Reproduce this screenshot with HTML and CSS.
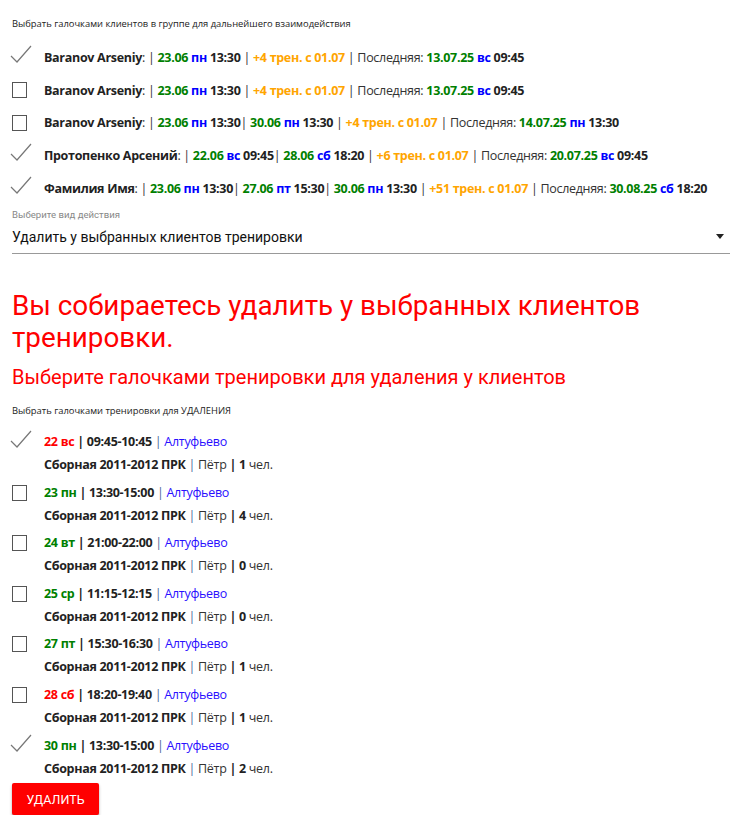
FILE: index.html
```html
<!DOCTYPE html>
<html lang="ru">
<head>
<meta charset="utf-8">
<title>Удаление тренировок</title>
<link rel="stylesheet" href="styles.css">
</head>
<body>
<div class="page">
  <div class="small-label clients-label">Выбрать галочками клиентов в группе для дальнейшего взаимодействия</div>
  <div class="clients">
    <div class="row">
      <span class="cb checked"><svg viewBox="0 0 22 18" width="22" height="18"><polyline points="1,11 7,17 21,1" /></svg></span>
      <span class="txt"><b>Baranov Arseniy</b>: | <b class="g">23.06</b> <b class="bl">пн</b> <b>13:30</b> | <b class="o">+4 трен. с 01.07</b> | Последняя: <b class="g">13.07.25</b> <b class="bl">вс</b> <b>09:45</b></span>
    </div>
    <div class="row">
      <span class="cb"><span class="box"></span></span>
      <span class="txt"><b>Baranov Arseniy</b>: | <b class="g">23.06</b> <b class="bl">пн</b> <b>13:30</b> | <b class="o">+4 трен. с 01.07</b> | Последняя: <b class="g">13.07.25</b> <b class="bl">вс</b> <b>09:45</b></span>
    </div>
    <div class="row">
      <span class="cb"><span class="box"></span></span>
      <span class="txt"><b>Baranov Arseniy</b>: | <b class="g">23.06</b> <b class="bl">пн</b> <b>13:30</b>| <b class="g">30.06</b> <b class="bl">пн</b> <b>13:30</b> | <b class="o">+4 трен. с 01.07</b> | Последняя: <b class="g">14.07.25</b> <b class="bl">пн</b> <b>13:30</b></span>
    </div>
    <div class="row">
      <span class="cb checked"><svg viewBox="0 0 22 18" width="22" height="18"><polyline points="1,11 7,17 21,1" /></svg></span>
      <span class="txt"><b>Протопенко Арсений</b>: | <b class="g">22.06</b> <b class="bl">вс</b> <b>09:45</b>| <b class="g">28.06</b> <b class="bl">сб</b> <b>18:20</b> | <b class="o">+6 трен. с 01.07</b> | Последняя: <b class="g">20.07.25</b> <b class="bl">вс</b> <b>09:45</b></span>
    </div>
    <div class="row">
      <span class="cb checked"><svg viewBox="0 0 22 18" width="22" height="18"><polyline points="1,11 7,17 21,1" /></svg></span>
      <span class="txt"><b>Фамилия Имя</b>: | <b class="g">23.06</b> <b class="bl">пн</b> <b>13:30</b>| <b class="g">27.06</b> <b class="bl">пт</b> <b>15:30</b>| <b class="g">30.06</b> <b class="bl">пн</b> <b>13:30</b> | <b class="o">+51 трен. с 01.07</b> | Последняя: <b class="g">30.08.25</b> <b class="bl">сб</b> <b>18:20</b></span>
    </div>
  </div>

  <div class="select-field">
    <div class="select-label">Выберите вид действия</div>
    <div class="select-input">
      <span>Удалить у выбранных клиентов тренировки</span>
      <span class="arrow"></span>
    </div>
  </div>

  <h1 class="warn">Вы собираетесь удалить у выбранных клиентов тренировки.</h1>
  <h2 class="sub">Выберите галочками тренировки для удаления у клиентов</h2>

  <div class="small-label trainings-label">Выбрать галочками тренировки для УДАЛЕНИЯ</div>
  <div class="trainings">
    <div class="item">
      <span class="cb checked"><svg viewBox="0 0 22 18" width="22" height="18"><polyline points="1,11 7,17 21,1" /></svg></span>
      <div class="lines">
        <div class="l1"><b class="r">22 вс</b> <b>| 09:45-10:45</b> <span class="pipe">|</span> <span class="place">Алтуфьево</span></div>
        <div class="l2"><b>Сборная 2011-2012 ПРК</b> <span class="pipe">|</span> Пётр <b>| 1</b> чел.</div>
      </div>
    </div>
    <div class="item">
      <span class="cb"><span class="box"></span></span>
      <div class="lines">
        <div class="l1"><b class="g">23 пн</b> <b>| 13:30-15:00</b> <span class="pipe">|</span> <span class="place">Алтуфьево</span></div>
        <div class="l2"><b>Сборная 2011-2012 ПРК</b> <span class="pipe">|</span> Пётр <b>| 4</b> чел.</div>
      </div>
    </div>
    <div class="item">
      <span class="cb"><span class="box"></span></span>
      <div class="lines">
        <div class="l1"><b class="g">24 вт</b> <b>| 21:00-22:00</b> <span class="pipe">|</span> <span class="place">Алтуфьево</span></div>
        <div class="l2"><b>Сборная 2011-2012 ПРК</b> <span class="pipe">|</span> Пётр <b>| 0</b> чел.</div>
      </div>
    </div>
    <div class="item">
      <span class="cb"><span class="box"></span></span>
      <div class="lines">
        <div class="l1"><b class="g">25 ср</b> <b>| 11:15-12:15</b> <span class="pipe">|</span> <span class="place">Алтуфьево</span></div>
        <div class="l2"><b>Сборная 2011-2012 ПРК</b> <span class="pipe">|</span> Пётр <b>| 0</b> чел.</div>
      </div>
    </div>
    <div class="item">
      <span class="cb"><span class="box"></span></span>
      <div class="lines">
        <div class="l1"><b class="g">27 пт</b> <b>| 15:30-16:30</b> <span class="pipe">|</span> <span class="place">Алтуфьево</span></div>
        <div class="l2"><b>Сборная 2011-2012 ПРК</b> <span class="pipe">|</span> Пётр <b>| 1</b> чел.</div>
      </div>
    </div>
    <div class="item">
      <span class="cb"><span class="box"></span></span>
      <div class="lines">
        <div class="l1"><b class="r">28 сб</b> <b>| 18:20-19:40</b> <span class="pipe">|</span> <span class="place">Алтуфьево</span></div>
        <div class="l2"><b>Сборная 2011-2012 ПРК</b> <span class="pipe">|</span> Пётр <b>| 1</b> чел.</div>
      </div>
    </div>
    <div class="item">
      <span class="cb checked"><svg viewBox="0 0 22 18" width="22" height="18"><polyline points="1,11 7,17 21,1" /></svg></span>
      <div class="lines">
        <div class="l1"><b class="g">30 пн</b> <b>| 13:30-15:00</b> <span class="pipe">|</span> <span class="place">Алтуфьево</span></div>
        <div class="l2"><b>Сборная 2011-2012 ПРК</b> <span class="pipe">|</span> Пётр <b>| 2</b> чел.</div>
      </div>
    </div>
  </div>

  <button class="btn-delete">УДАЛИТЬ</button>
</div>
</body>
</html>
```

FILE: styles.css
```css
* { box-sizing: border-box; }
html, body { margin: 0; padding: 0; background: #fff; }
body {
  font-family: "Open Sans", "Noto Sans", sans-serif;
  color: #333;
}
.page { padding: 0 8px 0 12px; }
b { font-weight: 700; color: #222; }
.g { color: #008000; }
.bl { color: #0000ff; }
.o { color: #ffa500; }
.r { color: #ff0000; }

.small-label { font-size: 9.4px; line-height: 12px; color: #222; }
.clients-label { padding-top: 18px; margin-bottom: 11px; }

.row {
  display: flex;
  align-items: center;
  height: 32.7px;
  font-size: 12.5px;
  letter-spacing: -0.3px;
  white-space: nowrap;
}
.cb {
  flex: 0 0 32px;
  width: 32px;
  height: 20px;
  display: flex;
  align-items: center;
  position: relative;
}
.cb .box {
  display: block;
  width: 15px;
  height: 16px;
  border: 1.5px solid #555;
  margin-left: 0;
}
.cb svg { margin-left: -2px; margin-top: -6px; }
.cb svg polyline { fill: none; stroke: #777; stroke-width: 1.2; }

.select-field { margin-top: 4.5px; width: 718px; }
.select-label {
  font-family: Roboto, sans-serif;
  font-size: 9.6px;
  line-height: 12px;
  color: #888;
}
.select-input {
  font-family: Roboto, sans-serif;
  font-size: 14px;
  line-height: 20px;
  color: #111;
  padding: 6px 0;
  border-bottom: 1px solid #999;
  display: flex;
  align-items: center;
  justify-content: space-between;
}
.arrow {
  width: 0; height: 0;
  border-left: 4.5px solid transparent;
  border-right: 4.5px solid transparent;
  border-top: 5px solid #222;
  margin-right: 6px;
}

.warn {
  font-family: Roboto, sans-serif;
  font-weight: 400;
  font-size: 27.8px;
  line-height: 32px;
  color: #ff0000;
  margin: 36px 0 0;
}
.sub {
  font-family: Roboto, sans-serif;
  font-weight: 400;
  font-size: 20px;
  line-height: 26px;
  color: #ff0000;
  margin: 10px 0 0;
}
.trainings-label { margin-top: 15px; margin-bottom: 13px; }
.trainings { margin-bottom: -1px; }

.item {
  display: flex;
  align-items: flex-start;
  height: 50.6px;
  font-size: 12.5px;
  letter-spacing: -0.3px;
  white-space: nowrap;
}
.item .cb { margin-top: 2px; }
.l1 { line-height: 24px; height: 24px; }
.l2 { line-height: 22px; height: 22px; }
.pipe { color: #4a6a9a; }
.place { color: #2a10ff; }

.btn-delete {
  display: block;
  font-family: Roboto, sans-serif;
  font-size: 12.5px;
  font-weight: 400;
  color: #fff;
  background: #ff0000;
  border: none;
  border-radius: 2px;
  height: 32px;
  width: 87px;
  padding: 0;
  box-shadow: 0 2px 3px rgba(0,0,0,0.3), 0 1px 1px rgba(0,0,0,0.15);
}
```
